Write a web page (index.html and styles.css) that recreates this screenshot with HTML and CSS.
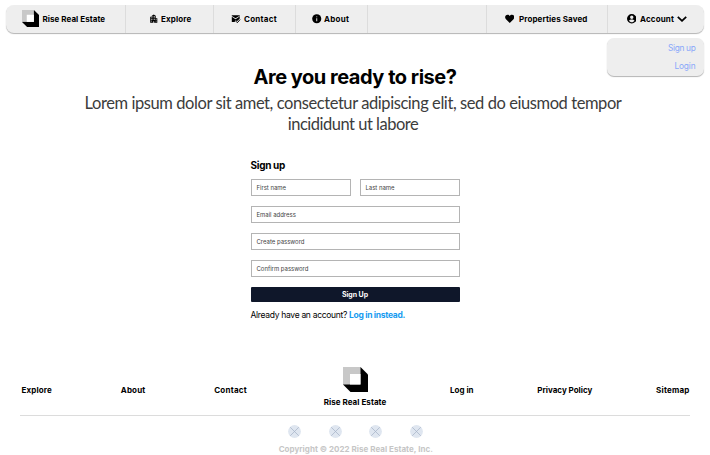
FILE: index.html
```html
<!DOCTYPE html>
<html lang="en">
<head>
<meta charset="utf-8">
<title>Rise Real Estate – Sign up</title>
<link rel="stylesheet" href="styles.css">
</head>
<body>
<svg width="0" height="0" class="defs">
  <symbol id="logo" viewBox="0 0 25 25"><path d="M17.5 0 25 7.5V25H7.500L0 17.500Z"/><path fill="#c8c8c8" d="M0 0H17.500V17.500H0Z"/><path fill="#fff" d="M7 7H17.500V17.500H7Z"/></symbol>
  <symbol id="placeholder" viewBox="0 0 13 13"><circle cx="6.500" cy="6.500" r="6.400" fill="#dfe6f0"/><path d="m2.200 2.200 8.600 8.600m0-8.600-8.600 8.600" stroke="#a4b0c4" stroke-width=".7"/></symbol>
</svg>
<header class="nav">
  <a class="item brand"><svg class="logo"><use href="#logo"/></svg><span>Rise Real Estate</span></a>
  <a class="item explore"><svg viewBox="0 0 24 24"><path fill-rule="evenodd" d="M17 11V4.500L12 1 7 4.500V7H3v15h8v-4h2v4h8V11ZM7 19H5v-2h2Zm0-4H5v-2h2Zm0-4H5V9h2Zm4 4H9v-2h2Zm0-4H9V9h2Zm0-4H9V5h2Zm4 8h-2v-2h2Zm0-4h-2V9h2Zm0-4h-2V5h2Zm4 12h-2v-2h2Zm0-4h-2v-2h2Z"/></svg><span>Explore</span></a>
  <a class="item contact"><svg viewBox="0 0 24 24"><path d="M2 3h20v9l-7 6-3-2-3 4H2V7l9.500 6L21 7V5l-9.500 6L2 5Z"/><path d="m12 18 4 4 7-8" fill="none" stroke="#000" stroke-width="2.500"/></svg><span>Contact</span></a>
  <a class="item about"><svg viewBox="0 0 24 24"><circle cx="12" cy="12" r="11.500"/><path fill="#eee" d="M10.800 6h2.400v2.500h-2.400Zm0 4.500h2.400V18h-2.400Z"/></svg><span>About</span></a>
  <div class="spacer"></div>
  <a class="item saved"><svg viewBox="0 0 24 24"><path d="M12 23 2.500 13.500C-2 8 1 2 6.500 2c2.500 0 4.500 1.200 5.500 3 1-1.800 3-3 5.500-3C23 2 26 8 21.500 13.500Z"/></svg><span>Properties Saved</span></a>
  <div class="item account"><svg viewBox="0 0 24 24"><path fill-rule="evenodd" d="M12 0a12 12 0 1 0 0 24 12 12 0 0 0 0-24Zm0 4a4.300 4.300 0 1 1 0 8.600A4.300 4.300 0 0 1 12 4Zm0 17c-3 0-5.500-1.500-7-3.800 1-2 4.500-3 7-3s6 1 7 3C17.500 19.500 15 21 12 21Z"/></svg><span>Account</span><svg class="chev" viewBox="0 0 10 6"><path d="m.8.8 4.200 4 4.200-4" fill="none" stroke="#000" stroke-width="1.800"/></svg>
    <div class="menu"><a class="m1">Sign up</a><a class="m2">Login</a></div>
  </div>
</header>
<main>
  <h1>Are you ready to rise?</h1>
  <p class="lead">Lorem ipsum dolor sit amet, consectetur adipiscing elit, sed do eiusmod tempor<br><span>incididunt ut labore</span></p>
  <form>
    <h2>Sign up</h2>
    <div class="row"><div class="field">First name</div><div class="field">Last name</div></div>
    <div class="field">Email address</div>
    <div class="field">Create password</div>
    <div class="field">Confirm password</div>
    <button type="button">Sign Up</button>
    <p class="switch"><span>Already have an account?</span><a>Log in instead.</a></p>
  </form>
</main>
<footer>
  <nav class="links">
    <div class="side"><a>Explore</a><a class="f-about">About</a><a class="f-contact">Contact</a></div>
    <div class="center"><svg><use href="#logo"/></svg><span>Rise Real Estate</span></div>
    <div class="side right"><a class="f-login">Log in</a><a>Privacy Policy</a><a class="f-site">Sitemap</a></div>
  </nav>
  <div class="social"><svg><use href="#placeholder"/></svg><svg><use href="#placeholder"/></svg><svg><use href="#placeholder"/></svg><svg><use href="#placeholder"/></svg></div>
  <p class="copy">Copyright © 2022 Rise Real Estate, Inc.</p>
</footer>
</body>
</html>
```
FILE: styles.css
```css
* { box-sizing: border-box; }
body { margin: 0; padding: 5px 6px 0; height: 455px; overflow: hidden; background: #fff; color: #000; font: 700 8px/12px Inter, sans-serif; }
h1, h2, p { margin: 0; }
svg { display: block; flex: none; }
.defs { position: absolute; }

.nav { display: flex; width: 698px; height: 27.500px; background: #eee; border-radius: 8px; box-shadow: 0 1px 1px #b4b4b4; letter-spacing: .05px; }
.item { display: flex; align-items: center; gap: 3px; border-right: 1px solid #dcdcdc; }
.item > svg { width: 9.500px; height: 9.500px; }
.brand { width: 120px; padding-left: 16px; gap: 3.500px; }
.brand .logo { width: 17px; height: 17px; }
.explore { width: 88px; padding-left: 22.500px; letter-spacing: .15px; }
.contact { width: 81.500px; padding-left: 17px; gap: 3.500px; letter-spacing: .25px; }
.about { width: 72.500px; padding-left: 16.500px; gap: 2.500px; letter-spacing: .3px; }
.spacer { flex: 1; border-right: 1px solid #dcdcdc; }
.saved { width: 121px; padding-left: 18px; gap: 5px; letter-spacing: .105px; }
.account { position: relative; width: 96.500px; padding-left: 19px; gap: 4px; letter-spacing: .143px; border: 0; }
.item > .chev { width: 10px; height: 6px; margin-left: -1px; }
.menu { position: absolute; top: 32.500px; right: 0; width: 97px; height: 38px; padding: 4px 8.500px 0 0; display: flex; flex-direction: column; gap: 6px; align-items: flex-end; background: #eee; border-radius: 7px; box-shadow: 0 1px 1px #b4b4b4; color: #88a7fa; font-weight: 400; font-size: 8.300px; letter-spacing: -.3px; }
.menu .m2 { letter-spacing: -.13px; }

main { display: flex; flex-direction: column; align-items: center; }
h1 { margin-top: 32.500px; font-size: 20px; line-height: 24px; letter-spacing: -.477px; }
.lead { margin: 4px 4px 0 0; font: 400 16.500px/21px Lato, sans-serif; letter-spacing: -.425px; color: #3c3c3c; text-align: center; }
.lead span { letter-spacing: -.49px; }
form { width: 209px; margin-top: 23px; }
h2 { font-size: 10px; line-height: 14px; letter-spacing: -.314px; margin-bottom: 7px; }
.row { display: grid; grid-template-columns: 1fr 1fr; gap: 9px; }
.field { height: 17px; padding: 0 5px; margin-bottom: 10px; border: 1px solid #b4b4b4; font-weight: 400; font-size: 6px; line-height: 15px; letter-spacing: -.02px; color: #444; }
button { display: block; width: 100%; height: 15px; padding: 0; border: 0; border-radius: 1px; background: #0f172a; color: #fff; font: 700 7px/15px Inter, sans-serif; letter-spacing: -.065px; }
.switch { display: flex; gap: 2px; margin-top: 7px; font-weight: 400; font-size: 8.500px; letter-spacing: -.303px; white-space: nowrap; }
.switch a { font-weight: 700; color: #179bf0; letter-spacing: -.312px; }

footer { margin: 45px 14px 0; }
.links { display: grid; grid-template-columns: 1fr 64px 1fr; align-items: center; height: 50px; border-bottom: 1px solid #dcdcdc; letter-spacing: .15px; }
.side { display: flex; justify-content: space-between; padding: 0 76px 1px 1.500px; }
.side.right { padding: 0 .5px 1px 63px; letter-spacing: 0; }
.f-contact { letter-spacing: .25px; }
.f-site { letter-spacing: .2px; }
.center { display: flex; flex-direction: column; align-items: center; gap: 4px; padding-bottom: 7px; letter-spacing: .05px; }
.center svg { width: 25px; height: 25px; }
.social { display: flex; justify-content: center; gap: 27.500px; margin: 9px 0 0 .5px; }
.social svg { width: 13px; height: 13px; }
.copy { margin: 5px 0 0 1.500px; text-align: center; color: #c6c6c6; letter-spacing: .025px; }
```
